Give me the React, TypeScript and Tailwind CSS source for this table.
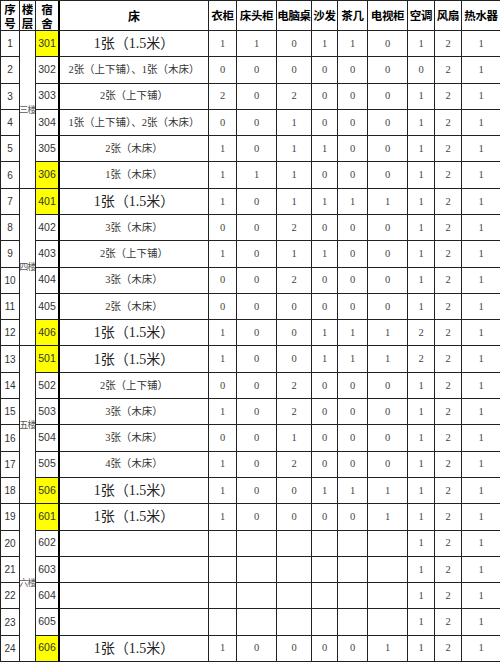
import React from 'react'

type Row = {
  no: number
  room: string
  hl?: boolean
  bed?: string
  big?: boolean
  v: string[]
}

const headers = ['衣柜', '床头柜', '电脑桌', '沙发', '茶几', '电视柜', '空调', '风扇', '热水器']

const BIG = '1张（1.5米）'

const rows: Row[] = [
  { no: 1, room: '301', hl: true, bed: BIG, big: true, v: ['1', '1', '0', '1', '1', '0', '1', '2', '1'] },
  { no: 2, room: '302', bed: '2张（上下铺）、1张（木床）', v: ['0', '0', '0', '0', '0', '0', '0', '2', '1'] },
  { no: 3, room: '303', bed: '2张（上下铺）', v: ['2', '0', '2', '0', '0', '0', '1', '2', '1'] },
  { no: 4, room: '304', bed: '1张（上下铺）、2张（木床）', v: ['0', '0', '1', '0', '0', '0', '1', '2', '1'] },
  { no: 5, room: '305', bed: '2张（木床）', v: ['1', '0', '1', '1', '0', '0', '1', '2', '1'] },
  { no: 6, room: '306', hl: true, bed: '1张（木床）', v: ['1', '1', '1', '0', '0', '0', '1', '2', '1'] },
  { no: 7, room: '401', hl: true, bed: BIG, big: true, v: ['1', '0', '1', '1', '1', '1', '1', '2', '1'] },
  { no: 8, room: '402', bed: '3张（木床）', v: ['0', '0', '2', '0', '0', '0', '1', '2', '1'] },
  { no: 9, room: '403', bed: '2张（上下铺）', v: ['1', '0', '1', '1', '0', '0', '1', '2', '1'] },
  { no: 10, room: '404', bed: '3张（木床）', v: ['0', '0', '2', '0', '0', '0', '1', '2', '1'] },
  { no: 11, room: '405', bed: '2张（木床）', v: ['0', '0', '0', '0', '0', '0', '1', '2', '1'] },
  { no: 12, room: '406', hl: true, bed: BIG, big: true, v: ['1', '0', '0', '1', '1', '1', '2', '2', '1'] },
  { no: 13, room: '501', hl: true, bed: BIG, big: true, v: ['1', '0', '0', '1', '1', '1', '2', '2', '1'] },
  { no: 14, room: '502', bed: '2张（上下铺）', v: ['0', '0', '2', '0', '0', '0', '1', '2', '1'] },
  { no: 15, room: '503', bed: '3张（木床）', v: ['1', '0', '2', '0', '0', '0', '1', '2', '1'] },
  { no: 16, room: '504', bed: '3张（木床）', v: ['0', '0', '1', '0', '0', '0', '1', '2', '1'] },
  { no: 17, room: '505', bed: '4张（木床）', v: ['1', '0', '2', '0', '0', '0', '1', '2', '1'] },
  { no: 18, room: '506', hl: true, bed: BIG, big: true, v: ['1', '0', '0', '1', '1', '1', '1', '2', '1'] },
  { no: 19, room: '601', hl: true, bed: BIG, big: true, v: ['1', '0', '0', '0', '0', '1', '1', '2', '1'] },
  { no: 20, room: '602', v: ['', '', '', '', '', '', '1', '2', '1'] },
  { no: 21, room: '603', v: ['', '', '', '', '', '', '1', '2', '1'] },
  { no: 22, room: '604', v: ['', '', '', '', '', '', '1', '2', '1'] },
  { no: 23, room: '605', v: ['', '', '', '', '', '', '1', '2', '1'] },
  { no: 24, room: '606', hl: true, bed: BIG, big: true, v: ['1', '0', '0', '0', '0', '1', '1', '2', '1'] },
]

const floors = ['三楼', '四楼', '五楼', '六楼']

const cell = 'flex items-center justify-center border-r border-b border-[#222] bg-white overflow-hidden'
const serif = "font-['Liberation_Serif','Noto_Sans_CJK_SC',serif]"
const cjk = "font-['Noto_Sans_CJK_SC',sans-serif]"
const sans = "font-['Liberation_Sans','Noto_Sans_CJK_SC',sans-serif]"

export default function App() {
  return (
    <div className="w-[500px] h-[662px] bg-white">
      <div className="grid h-[662px] w-[500px] grid-cols-[19px_16px_24px_149px_28px_40px_35px_26px_30px_40px_27px_27px_39px] grid-rows-[30px_repeat(24,minmax(0,1fr))] border-l border-t border-[#222] text-[#333]">
        {/* Header */}
        <div className={`${cell} ${cjk} text-center text-[11.5px] leading-[14px] font-bold text-black`}>
          序<br />号
        </div>
        <div className={`${cell} ${cjk} text-center text-[11.5px] leading-[14px] font-bold text-black`}>
          楼<br />层
        </div>
        <div className={`${cell} ${cjk} text-center text-[11.5px] leading-[14px] font-bold text-black border-r-2 border-r-black`}>
          宿<br />舍
        </div>
        <div className={`${cell} ${cjk} text-[12px] font-bold text-black`}>床</div>
        {headers.map((h) => (
          <div key={h} className={`${cell} ${cjk} overflow-visible whitespace-nowrap text-[11.5px] font-bold text-black tracking-[-0.3px]`}>
            {h}
          </div>
        ))}

        {/* Body */}
        {rows.map((r, i) => (
          <React.Fragment key={r.no}>
            <div className={`${cell} ${sans} text-[10px]`}>{r.no}</div>
            {i % 6 === 0 && (
              <div className={`row-span-6 flex items-center justify-center overflow-hidden border-r border-b border-[#222] bg-white ${cjk} whitespace-nowrap text-[9px] tracking-[-0.8px] text-[#555]`}>
                {floors[i / 6]}
              </div>
            )}
            <div className="flex items-stretch border-r-2 border-b border-r-black border-b-[#222] bg-white">
              <div
                className={`flex flex-1 items-center justify-center ${sans} text-[10.5px] ${
                  r.hl ? 'bg-[#ffff00]' : ''
                }`}
              >
                {r.room}
              </div>
            </div>
            <div
              className={`${cell} ${serif} whitespace-nowrap ${
                r.big ? 'text-[14px] text-[#222]' : 'text-[10.5px]'
              }`}
            >
              {r.bed ?? ''}
            </div>
            {r.v.map((x, j) => (
              <div key={j} className={`${cell} ${serif} text-[10.5px] text-[#444]`}>
                {x}
              </div>
            ))}
          </React.Fragment>
        ))}
      </div>
    </div>
  )
}
